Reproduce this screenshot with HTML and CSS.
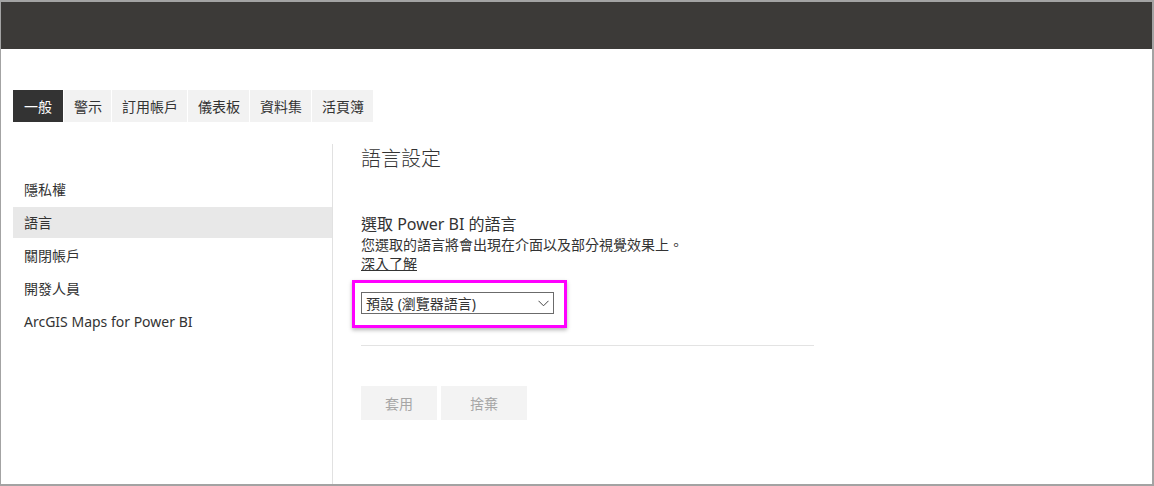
FILE: index.html
```html
<!DOCTYPE html>
<html lang="zh-TW">
<head>
<meta charset="utf-8">
<title>設定</title>
<link rel="stylesheet" href="styles.css">
</head>
<body>
<div class="frame">
  <header class="topbar"></header>
  <nav class="tabs">
    <span class="tab active">一般</span>
    <span class="tab">警示</span>
    <span class="tab">訂用帳戶</span>
    <span class="tab">儀表板</span>
    <span class="tab">資料集</span>
    <span class="tab">活頁簿</span>
  </nav>
  <div class="body">
    <aside class="sidebar">
      <div class="side-item">隱私權</div>
      <div class="side-item selected">語言</div>
      <div class="side-item">關閉帳戶</div>
      <div class="side-item">開發人員</div>
      <div class="side-item">ArcGIS Maps for Power BI</div>
    </aside>
    <main class="content">
      <h1 class="heading">語言設定</h1>
      <h2 class="subheading">選取 Power BI 的語言</h2>
      <p class="desc" lang="zh-TW">您選取的語言將會出現在介面以及部分視覺效果上。</p>
      <a class="link" href="#">深入了解</a>
      <div class="highlight">
        <div class="select">
          <span>預設 (瀏覽器語言)</span>
          <svg class="chev" width="11" height="7" viewBox="0 0 11 7"><path d="M0.5 0.8 L5.5 5.8 L10.5 0.8" fill="none" stroke="#444" stroke-width="1"/></svg>
        </div>
      </div>
      <div class="rule"></div>
      <div class="buttons">
        <button class="btn apply">套用</button>
        <button class="btn discard">捨棄</button>
      </div>
    </main>
  </div>
</div>
</body>
</html>
```

FILE: styles.css
```css
html, body {
  margin: 0;
  padding: 0;
  background: #ffffff;
}
body {
  font-family: "Noto Sans", "Noto Sans CJK TC", sans-serif;
  color: #333333;
}
.frame {
  box-sizing: border-box;
  width: 1154px;
  height: 486px;
  border-style: solid;
  border-color: #a3a3a3;
  border-width: 2px 2px 2px 1px;
  display: flex;
  flex-direction: column;
  overflow: hidden;
}
.topbar {
  height: 47px;
  background: #3c3a38;
  flex: none;
}
.tabs {
  display: flex;
  gap: 1px;
  margin: 41px 0 0 12px;
  height: 32px;
  flex: none;
}
.tab {
  display: flex;
  align-items: center;
  padding: 0 9px 0 10px;
  background: #f2f2f2;
  font-family: "Noto Sans CJK TC", sans-serif;
  font-size: 14px;
  color: #333;
}
.tab.active {
  background: #333333;
  color: #ffffff;
  padding: 0 11px;
}
.body {
  display: flex;
  flex: 1;
  margin: 22px 0 0 12px;
}
.sidebar {
  width: 319px;
  border-right: 1px solid #e1e1e1;
  padding-top: 30px;
  flex: none;
}
.side-item {
  height: 31px;
  margin-bottom: 2px;
  line-height: 31px;
  padding-left: 11px;
  font-size: 14px;
  color: #333;
}
.side-item.selected {
  background: #e8e8e8;
}
.content {
  padding-left: 28px;
  display: flex;
  flex-direction: column;
  align-items: flex-start;
}
.heading {
  margin: 0;
  font-family: "Noto Sans CJK TC", sans-serif;
  font-weight: 300;
  font-size: 20px;
  line-height: 28px;
  color: #333;
}
.subheading {
  margin: 41px 0 0;
  font-weight: 400;
  font-size: 16px;
  line-height: 22px;
  color: #333;
}
.desc {
  margin: 0;
  font-family: "Noto Sans CJK TC", sans-serif;
  font-size: 14px;
  line-height: 19px;
  color: #333;
}
.link {
  font-size: 14px;
  line-height: 19px;
  color: #333;
  text-decoration: underline;
}
.highlight {
  margin: 7px 0 0 -9px;
  border: 3px solid #ff00ff;
  padding: 9px 10px 11px 6px;
  box-shadow: 0 2px 4px rgba(0, 0, 0, 0.3);
}
.select {
  box-sizing: border-box;
  width: 193px;
  height: 22px;
  border: 1px solid #6b6b6b;
  display: flex;
  align-items: center;
  justify-content: space-between;
  padding: 0 4px 0 4px;
  font-size: 14px;
  color: #333;
}
.chev {
  display: block;
}
.rule {
  width: 453px;
  height: 1px;
  background: #e3e3e3;
  margin-top: 17px;
}
.buttons {
  display: flex;
  gap: 4px;
  margin-top: 40px;
}
.btn {
  height: 34px;
  border: none;
  background: #f3f3f3;
  color: #a6a6a6;
  font-family: "Noto Sans CJK TC", sans-serif;
  font-size: 14px;
  padding: 0;
}
.btn.apply {
  width: 76px;
}
.btn.discard {
  width: 86px;
}
```
